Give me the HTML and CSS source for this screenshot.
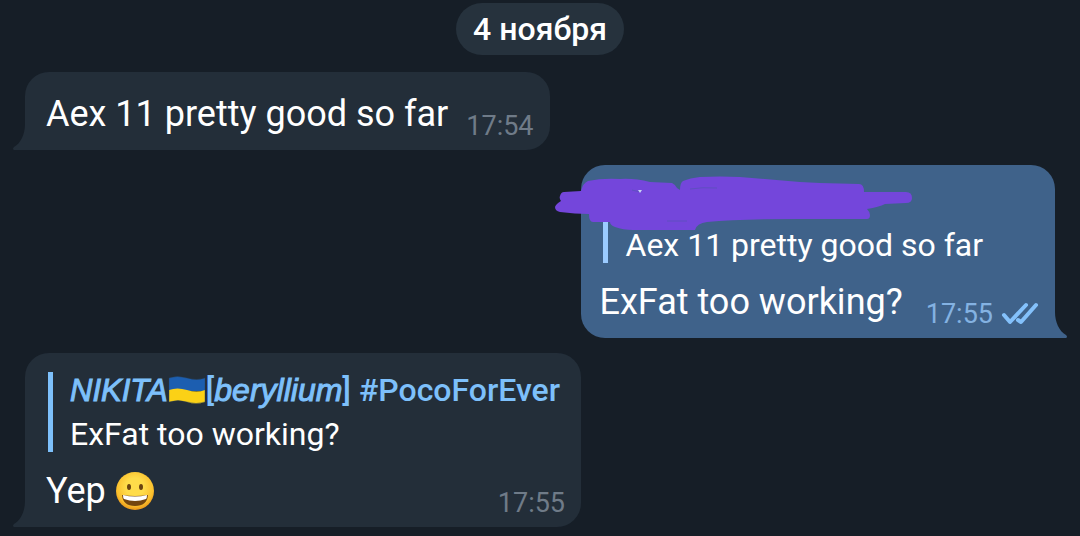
FILE: index.html
```
<!DOCTYPE html>
<html lang="ru">
<head>
    <meta charset="UTF-8">
    <meta name="viewport" content="width=device-width, initial-scale=1.0">
    <title>Chat</title>
    <link rel="stylesheet" href="styles.css">
</head>
<body>
    <main class="chat">
        <div class="date">4 ноября</div>

        <article class="bubble incoming">
            <div class="row">
                <p class="text">Aex 11 pretty good so far</p>
                <div class="meta"><time>17:54</time></div>
            </div>
            <svg class="tail" viewBox="0 0 13 26" aria-hidden="true">
                <path d="M12 0C12 10 8 19 1 23Q-1 25 1 26H13V0Z"/>
            </svg>
        </article>

        <article class="bubble outgoing">
            <blockquote class="quote">
                <div class="quote-name"></div>
                <p class="quote-text">Aex 11 pretty good so far</p>
            </blockquote>
            <div class="row">
                <p class="text">ExFat too working?</p>
                <div class="meta">
                    <time>17:55</time>
                    <svg class="checks" viewBox="0 0 38 24" aria-hidden="true">
                        <path d="M3 13L9 20L25 3"/>
                        <path d="M17 18L20 20L35 3"/>
                    </svg>
                </div>
            </div>
            <svg class="tail" viewBox="0 0 13 26" aria-hidden="true">
                <path d="M12 0C12 10 8 19 1 23Q-1 25 1 26H13V0Z"/>
            </svg>
            <!-- marker stroke over the quoted name -->
            <svg class="marker" viewBox="0 0 370 65" aria-hidden="true">
                <path d="M5 37Q6 34 11 31Q9 28 10 26Q11 22 14 22L31 21Q33 13 38 11Q52 8 70 9Q84 8 100 12L122 13Q126 15 127 18L130 20Q130 13 133 11Q140 8 150 7Q170 6 190 7L250 12L270 13L309 14Q314 14 314 22H356Q362 22 362 28Q362 33 356 33L335 34Q329 37 317 39Q320 42 320 45Q320 49 317 49H250Q190 49 157 52Q147 53 145 60H83Q73 60 65 57Q60 55 60 52H43Q39 52 39 44Q25 44 10 42Q5 41 5 37Z"/>
                <path class="marker-gap" d="M140 19Q152 17 167 18M117 51L137 51M82 20L90 22"/>
                <path class="marker-dot" d="M88 20H92L90 23Z"/>
            </svg>
        </article>

        <article class="bubble incoming">
            <blockquote class="quote">
                <div class="quote-name"><i class="caps">NIKITA</i><svg class="flag" viewBox="0 0 38 30" role="img" aria-label="Ukraine">
                        <path d="M1 3Q9 0 19 3T37 3V16H1Z" fill="#1c5eb0"/>
                        <path d="M1 15Q9 12 19 15T37 15V27Q28 30 19 27T1 27Z" fill="#fbd116"/>
                        <path d="M1 3Q9 0 19 3T37 3V27Q28 30 19 27T1 27Z" fill="none" stroke="#27415b" stroke-opacity="0.4"/>
                    </svg>[<i>beryllium</i>] #PocoForEver</div>
                <p class="quote-text">ExFat too working?</p>
            </blockquote>
            <div class="row">
                <p class="text">Yep <svg class="emoji" viewBox="0 0 40 40" role="img" aria-label="Grinning face">
                        <defs>
                            <radialGradient id="face" cx="0.5" cy="0.4" r="0.6">
                                <stop offset="0.4" stop-color="#ffdc4a"/>
                                <stop offset="0.8" stop-color="#fbc02d"/>
                                <stop offset="1" stop-color="#e8941a"/>
                            </radialGradient>
                        </defs>
                        <circle cx="20" cy="20" r="19" fill="url(#face)"/>
                        <ellipse cx="14" cy="16" rx="2" ry="3" fill="#6b4310"/>
                        <ellipse cx="26" cy="16" rx="2" ry="3" fill="#6b4310"/>
                        <path d="M7 24Q20 26 33 24Q32 35 20 35T7 24Z" fill="#73450f"/>
                        <path d="M8 24Q20 27 32 24Q32 27 31 28Q20 32 9 28Q8 27 8 24Z" fill="#fff"/>
                    </svg></p>
                <div class="meta"><time>17:55</time></div>
            </div>
            <svg class="tail" viewBox="0 0 13 26" aria-hidden="true">
                <path d="M12 0C12 10 8 19 1 23Q-1 25 1 26H13V0Z"/>
            </svg>
        </article>
    </main>
</body>
</html>
```
FILE: styles.css
```
* {
    box-sizing: border-box;
}

body {
    margin: 0;
    background-color: #161e27;
    color: #ffffff;
    font-family: Roboto, "Noto Sans", sans-serif;
}

p,
blockquote {
    margin: 0;
}

.chat {
    display: flex;
    flex-direction: column;
    align-items: flex-start;
    gap: 15px;
    padding: 3px 25px 10px;
}

.date {
    align-self: center;
    margin-bottom: 2px;
    padding: 0 17px;
    border-radius: 26px;
    background-color: #26323d;
    font-size: 32px;
    font-weight: 500;
    line-height: 52px;
}

.bubble {
    position: relative;
    padding: 19px 16px 9px 21px;
    border-radius: 24px;
}

.incoming {
    background-color: #232e39;
    border-bottom-left-radius: 0;
}

.outgoing {
    align-self: flex-end;
    padding-left: 19px;
    background-color: #3f628a;
    border-bottom-right-radius: 0;
}

.row {
    display: flex;
    align-items: flex-end;
    justify-content: space-between;
    gap: 18px;
    padding-top: 2px;
}

.outgoing .row {
    gap: 23px;
}

.text {
    margin-bottom: 5px;
    font-size: 36px;
    line-height: 43px;
}

.meta {
    display: flex;
    align-items: center;
    gap: 8px;
    color: #6f7b88;
    font-size: 27px;
    line-height: 30px;
}

.outgoing .meta {
    color: #84b2e2;
}

.checks {
    width: 38px;
    height: 24px;
    fill: none;
    stroke: #84c1fb;
    stroke-width: 4;
    stroke-linecap: round;
    stroke-linejoin: round;
}

.quote {
    margin: 0 5px 16px 2px;
    padding-left: 17px;
    border-left: 5px solid #7dc0fb;
    font-size: 32px;
    line-height: 36px;
}

.outgoing .quote {
    margin-left: 3px;
    padding-left: 18px;
    border-color: #9bcbff;
}

.quote-name {
    min-height: 36px;
    margin-bottom: 7px;
    color: #7dc0fb;
    font-weight: 500;
    white-space: nowrap;
}

.quote-name i {
    font-family: "Liberation Sans", sans-serif;
    font-weight: 400;
    -webkit-text-stroke: 1px currentColor;
}

.quote-name .caps {
    font-size: 31px;
}

.flag {
    width: 38px;
    height: 30px;
    vertical-align: -4px;
}

.emoji {
    width: 40px;
    height: 40px;
    vertical-align: -8px;
}

.tail {
    position: absolute;
    bottom: 0;
    left: -12px;
    width: 13px;
    height: 26px;
    fill: #232e39;
}

.outgoing .tail {
    right: -12px;
    left: auto;
    fill: #3f628a;
    transform: scaleX(-1);
}

.marker {
    position: absolute;
    top: 5px;
    left: -31px;
    width: 370px;
    height: 65px;
    fill: #7446db;
}

.marker-gap {
    fill: none;
    stroke: #5f4fc0;
}

.marker-dot {
    fill: #c9d4f5;
}
```
